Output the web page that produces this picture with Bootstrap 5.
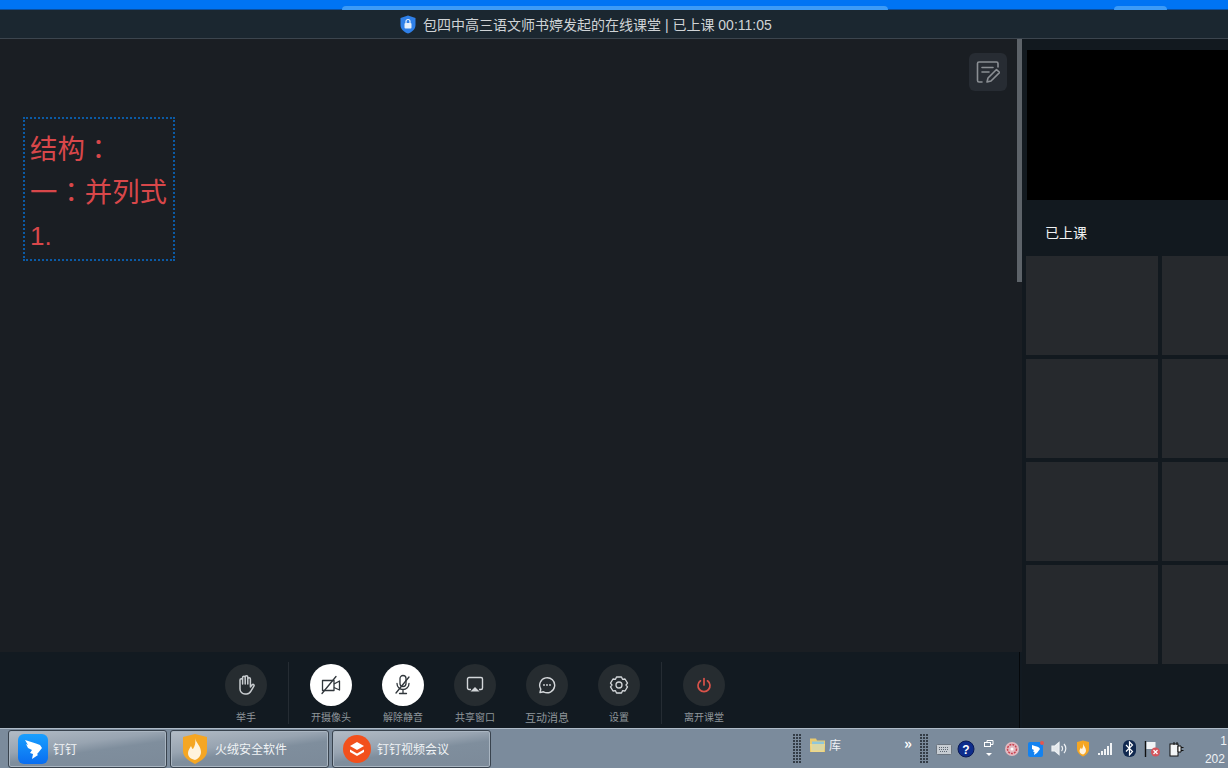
<!DOCTYPE html>
<html lang="zh-CN">
<head>
<meta charset="utf-8">
<title>在线课堂</title>
<link rel="stylesheet" href="https://cdn.jsdelivr.net/npm/bootstrap@5.3.0/dist/css/bootstrap.min.css">
<style>
html,body{height:768px;overflow:hidden;margin:0;background:#1a1e23;font-family:"Liberation Sans","Noto Sans CJK SC",sans-serif}
.shell{width:1228px;height:768px}
.topstrip{height:10px;background:#0074f4;border-bottom:1px solid #0b4f9f}
.toptab{height:4px;margin-top:6px;background:#3d9bf6;border-radius:4px 4px 0 0}
.tab-a{width:546px;margin-left:342px}
.tab-b{width:53px;margin-left:226px}
.titlebar{height:29px;background:#1b2730;border-bottom:1px solid #3c454e;padding:1px 0 0 399px;color:#cfd3d6;font-size:14px;gap:6px;line-height:1}
.bodyrow{height:689px}
.leftcol{width:1022px;flex:none;background:#121a21}
.midrow{height:613px}
.stage{width:1017px;background:#1a1e23;padding:11px 10px 0 23px}
.notebtn{width:38px;height:38px;background:#272c33;border-radius:6px;margin-top:3px}
.notebox{width:152px;height:144px;margin-top:26px;border:2px dotted #0b5aa5;color:#d8474a;font-size:27.4px;line-height:43px;padding:7px 0 0 5px;white-space:nowrap;font-family:"Noto Sans CJK SC",sans-serif}
.midcolon{font-family:"Noto Sans CJK TC",sans-serif}
.onedigit{font-family:"Liberation Sans",sans-serif;font-size:26px}
.scrolltrack{width:5px;background:#1a1e23}
.scrollthumb{height:243px;background:#5d6369}
.sidepanel{width:206px;flex:none;background:#12191f;padding:11px 0 0 4px;overflow:hidden}
.videobox{width:202px;height:150px;background:#000;margin-left:1px}
.statusline{height:56px;color:#f0f2f3;font-size:14px;padding:9px 0 0 19px;font-family:"Noto Sans CJK SC",sans-serif}
.tilegrid{display:grid;grid-template-columns:132px 132px;grid-auto-rows:99px;gap:4px;width:268px}
.tile{background:#26292d}
.toolbar{height:76px;background:#121a21;padding-left:210px;border-right:1px solid #05080b;margin-right:2px}
.toolitem{width:72px;height:76px;padding-top:12px}
.roundbtn{width:42px;height:42px;border-radius:50%;background:#262c30}
.roundbtn.lit{background:#fff}
.toollabel{font-size:10px;line-height:1;margin-top:6px;color:#8f969b;white-space:nowrap;font-family:"Noto Sans CJK SC",sans-serif}
.toollabel.wide{font-size:11px}
.toolsep{width:1px;height:62px;margin:10px 6px 0;background:#252c33}
.taskbar{height:40px;background:#7b8b9c;border-top:1px solid #aebbc8;padding-left:8px}
.taskbtn{width:159px;height:38px;flex:none;margin-right:3px;border:1px solid #39434e;border-radius:3px;box-shadow:inset 0 0 0 1px #a9b5c1;background:linear-gradient(172deg,#b3bcc6 0%,#98a4b1 38%,#7f8e9d 55%,#7c8a99 100%);color:#f0f3f5;font-size:12px;padding-left:9px;gap:5px;white-space:nowrap;font-family:"Noto Sans CJK SC",sans-serif}
.padicon{margin:0 1px}
.gripper{width:8px;height:30px;flex:none;background-image:radial-gradient(circle at 1px 1px,#343d47 1px,transparent 1.1px);background-size:3px 3px}
.bandleft{margin-left:299px}
.bandfolder{margin:-8px 0 0 8px;gap:3px;color:#eef1f4;font-size:12px;font-family:"Noto Sans CJK SC",sans-serif;width:111px;flex:none;padding-right:8px}
.chev{color:#fff;font-size:15px;font-weight:700;line-height:1;margin-left:auto;margin-top:-5px}
.tray{margin-left:8px;flex:none}
.trayicon{width:23.4px;height:24px;flex:none}
.trayfirst{width:18px;height:24px;flex:none}
.clock{color:#eef1f4;font-size:12px;width:40px;flex:none;line-height:18px;white-space:nowrap;text-align:right;padding:2px 1px 0 0}
.clockyear{text-align:left;padding-left:17px}
</style>
</head>
<body>
<div class="shell d-flex flex-column">
  <div class="topstrip d-flex">
    <div class="toptab tab-a"></div>
    <div class="toptab tab-b"></div>
  </div>
  <div class="titlebar d-flex align-items-center">
    <svg width="18" height="19" viewBox="0 0 18 19"><path d="M9 0.500l7.500 2.500v7c0 4.200-3.500 7-7.500 8.500C5 17 1.500 14.200 1.500 10V3z" fill="#2f80e8"/><rect x="5.500" y="8" width="7" height="5.500" rx="1" fill="#e6f0fb"/><path d="M7 8V6.500a2 2 0 0 1 4 0V8" fill="none" stroke="#e6f0fb" stroke-width="1.200"/></svg>
    <span>包四中高三语文师书婷发起的在线课堂 | 已上课 00:11:05</span>
  </div>
  <div class="bodyrow d-flex">
    <div class="leftcol d-flex flex-column">
      <div class="midrow d-flex">
        <div class="stage">
          <div class="d-flex justify-content-end">
            <div class="notebtn d-flex align-items-center justify-content-center">
              <svg width="24" height="24" viewBox="0 0 24 24" fill="none" stroke="#8b8f94" stroke-width="1.600" stroke-linecap="round" stroke-linejoin="round"><path d="M6 22H3a1.500 1.500 0 0 1-1.500-1.500V3.500A1.500 1.500 0 0 1 3 2h17.500A1.500 1.500 0 0 1 22 3.500V7"/><path d="M6 7.500h11M6 12h7"/><path d="M11 22l1-4 8.500-8.500 3 3L15 21z"/></svg>
            </div>
          </div>
          <div class="notebox">结构<span class="midcolon" lang="zh-TW">：</span><br>一<span class="midcolon" lang="zh-TW">：</span>并列式<br><span class="onedigit">1.</span></div>
        </div>
        <div class="scrolltrack"><div class="scrollthumb"></div></div>
      </div>
      <div class="toolbar d-flex">
        <div class="toolitem d-flex flex-column align-items-center">
          <div class="roundbtn d-flex align-items-center justify-content-center">
            <svg width="20" height="22" viewBox="0 0 20 22" fill="none" stroke="#c9cdd0" stroke-width="1.500" stroke-linecap="round" stroke-linejoin="round"><path d="M4 12V6a1.300 1.300 0 0 1 2.600 0v4V3.500a1.300 1.300 0 0 1 2.600 0V10 3a1.300 1.300 0 0 1 2.600 0v7-5a1.300 1.300 0 0 1 2.600 0v8l1.800-2.200c1-1.100 2.500.2 1.700 1.400l-3 5a5 5 0 0 1-4.300 2.800H9A5 5 0 0 1 4 15z"/></svg>
          </div>
          <div class="toollabel">举手</div>
        </div>
        <div class="toolsep"></div>
        <div class="toolitem d-flex flex-column align-items-center">
          <div class="roundbtn lit d-flex align-items-center justify-content-center">
            <svg width="20" height="20" viewBox="0 0 20 20" fill="none" stroke="#30363b" stroke-width="1.300" stroke-linejoin="round"><path d="M13 5.500H1.500v10H13z"/><path d="M13 9l5.500-3v9L13 12.500"/><path d="M1 18.500L15 1.500" stroke-linecap="round"/></svg>
          </div>
          <div class="toollabel">开摄像头</div>
        </div>
        <div class="toolitem d-flex flex-column align-items-center">
          <div class="roundbtn lit d-flex align-items-center justify-content-center">
            <svg width="20" height="22" viewBox="0 0 20 22" fill="none" stroke="#30363b" stroke-width="1.300" stroke-linecap="round"><rect x="7" y="1.500" width="6" height="11" rx="3"/><path d="M4 9.500a6 6 0 0 0 12 0M10 15.500V19M6.500 19.500h7"/><path d="M3 19L16 3"/></svg>
          </div>
          <div class="toollabel">解除静音</div>
        </div>
        <div class="toolitem d-flex flex-column align-items-center">
          <div class="roundbtn d-flex align-items-center justify-content-center">
            <svg width="18" height="18" viewBox="0 0 18 18" fill="none" stroke="#d4d7da" stroke-width="1.400"><path d="M5 13.500H3a1.500 1.500 0 0 1-1.500-1.500V3A1.500 1.500 0 0 1 3 1.500h12A1.500 1.500 0 0 1 16.500 3v9a1.500 1.500 0 0 1-1.500 1.500h-2"/><path d="M9 11l4.500 4.500h-9z" fill="#d4d7da" stroke="none"/></svg>
          </div>
          <div class="toollabel">共享窗口</div>
        </div>
        <div class="toolitem d-flex flex-column align-items-center">
          <div class="roundbtn d-flex align-items-center justify-content-center">
            <svg width="18" height="18" viewBox="0 0 18 18" fill="none" stroke="#d4d7da" stroke-width="1.400"><path d="M2 16.500l.8-3.300A7.500 7.500 0 1 1 5.500 15.800z" stroke-linejoin="round"/><circle cx="6" cy="9" r=".9" fill="#d4d7da" stroke="none"/><circle cx="9" cy="9" r=".9" fill="#d4d7da" stroke="none"/><circle cx="12" cy="9" r=".9" fill="#d4d7da" stroke="none"/></svg>
          </div>
          <div class="toollabel wide">互动消息</div>
        </div>
        <div class="toolitem d-flex flex-column align-items-center">
          <div class="roundbtn d-flex align-items-center justify-content-center">
            <svg width="20" height="20" viewBox="0 0 20 20" fill="none" stroke="#d4d7da" stroke-width="1.300" stroke-linejoin="round"><path d="M7.500 2h5l1 2.300 2.500-.3 2.500 4.200-1.500 1.800 1.500 1.800-2.500 4.200-2.500-.3-1 2.300h-5l-1-2.300-2.500.3L1.500 11.800 3 10 1.500 8.200 4 4l2.500.3z"/><circle cx="10" cy="10" r="3"/></svg>
          </div>
          <div class="toollabel">设置</div>
        </div>
        <div class="toolsep"></div>
        <div class="toolitem d-flex flex-column align-items-center">
          <div class="roundbtn d-flex align-items-center justify-content-center">
            <svg width="16" height="16" viewBox="0 0 16 16" fill="none" stroke="#d9534a" stroke-width="1.700" stroke-linecap="round"><path d="M8 1.500v6.500"/><path d="M4.500 3.800a6 6 0 1 0 7 0"/></svg>
          </div>
          <div class="toollabel">离开课堂</div>
        </div>
      </div>
    </div>
    <div class="sidepanel">
      <div class="videobox"></div>
      <div class="statusline d-flex align-items-center">已上课</div>
      <div class="tilegrid">
        <div class="tile"></div><div class="tile"></div>
        <div class="tile"></div><div class="tile"></div>
        <div class="tile"></div><div class="tile"></div>
        <div class="tile"></div><div class="tile"></div>
      </div>
    </div>
  </div>
  <div class="taskbar d-flex align-items-center">
    <div class="taskbtn d-flex align-items-center">
      <svg width="30" height="30" viewBox="0 0 30 30"><defs><linearGradient id="dtg" x1="0" y1="0" x2="0" y2="1"><stop offset="0" stop-color="#19a0ff"/><stop offset="1" stop-color="#0a6df0"/></linearGradient></defs><rect width="30" height="30" rx="6" fill="url(#dtg)"/><path d="M7 6c5 2 11 3 15 5l2 3-4 5-1 1 1 1-6 4 1-5-3-1 2-3-4-2-2-4 2 1z" fill="#fff"/></svg>
      <span>钉钉</span>
    </div>
    <div class="taskbtn d-flex align-items-center">
      <svg class="padicon" width="28" height="32" viewBox="0 0 28 32"><path d="M2 4l12-3 12 3v14c0 6-6 10-12 13C8 28 2 24 2 18z" fill="#f5a623"/><path d="M14 5c1 5 6 8 6 14 0 4-3 7-6 8-4-1-7-3-7-7 0-3 2-5 3-7 1 2 1 3 2 3 2-3 3-7 2-11z" fill="#fff3dd"/></svg>
      <span>火绒安全软件</span>
    </div>
    <div class="taskbtn d-flex align-items-center">
      <svg class="padicon" width="28" height="28" viewBox="0 0 28 28"><circle cx="14" cy="14" r="14" fill="#f2501c"/><path d="M14 7l7 4-7 4-7-4z" fill="#fff"/><path d="M7 14.500l7 4 7-4v2.500l-7 4-7-4z" fill="#fff"/></svg>
      <span>钉钉视频会议</span>
    </div>
    <div class="gripper bandleft"></div>
    <div class="bandfolder d-flex align-items-center">
      <svg width="17" height="16" viewBox="0 0 17 16"><path d="M1 1.500h6l1 2h8V15H1z" fill="#e8c96e"/><rect x="3" y="4.500" width="12" height="9" fill="#8fc7da"/><path d="M1 7h15l-1.200 8H2.200z" fill="#f2dc93" opacity=".75"/></svg>
      <span>库</span>
      <span class="chev">»</span>
    </div>
    <div class="gripper"></div>
    <div class="tray d-flex align-items-center">
      <div class="trayfirst d-flex align-items-center justify-content-start">
        <svg width="16" height="12" viewBox="0 0 16 12"><rect x=".5" y="1.500" width="15" height="10" rx="1" fill="#c6ccd2" stroke="#6b7580"/><path d="M3 4.500h10M3 6.500h10M4 8.500h8" stroke="#5e6873" stroke-dasharray="1 1"/></svg>
      </div>
      <div class="trayicon d-flex align-items-center justify-content-center">
        <svg width="18" height="18" viewBox="0 0 18 18"><circle cx="9" cy="9" r="8" fill="#0d2c8c" stroke="#0a1a55"/><text x="9" y="13.500" font-size="12" font-weight="700" fill="#fff" text-anchor="middle" font-family="Liberation Sans">?</text></svg>
      </div>
      <div class="trayicon d-flex align-items-center justify-content-center">
        <svg width="12" height="20" viewBox="0 0 12 20" fill="none" stroke="#fff"><rect x="1.500" y="3.500" width="6" height="4"/><path d="M4 3.500v-2h6v4H7.500"/><path d="M3 14h6l-3 3z" fill="#fff" stroke="none"/></svg>
      </div>
      <div class="trayicon d-flex align-items-center justify-content-center">
        <svg width="16" height="16" viewBox="0 0 16 16"><circle cx="8" cy="8" r="7" fill="#e4b9c0"/><circle cx="8" cy="8" r="4.500" fill="none" stroke="#c9414f" stroke-width="1.500" stroke-dasharray="2 1"/><circle cx="8" cy="8" r="1.500" fill="#fff"/></svg>
      </div>
      <div class="trayicon d-flex align-items-center justify-content-center">
        <svg width="16" height="16" viewBox="0 0 16 16"><rect width="15" height="15" y="1" rx="2" fill="#1482f0"/><path d="M4 4c3 1 5 1.500 7 2.500l1 1.500-3 4-3 2 .5-3-1.500-.5 1-1.500-2-1z" fill="#fff"/><circle cx="14" cy="2" r="2" fill="#e4584f"/></svg>
      </div>
      <div class="trayicon d-flex align-items-center justify-content-center">
        <svg width="17" height="15" viewBox="0 0 17 15" fill="none" stroke="#eef1f4" stroke-width="1.200"><path d="M1 5h3l4-3.500v12L4 10H1z" fill="#e4e8ec"/><path d="M10.500 5a3.500 3.500 0 0 1 0 5M13 3a6.500 6.500 0 0 1 0 9"/></svg>
      </div>
      <div class="trayicon d-flex align-items-center justify-content-center">
        <svg width="14" height="17" viewBox="0 0 14 17"><path d="M1 2l6-1.500L13 2v7c0 3.500-3 6-6 7.500C4 15 1 12.500 1 9z" fill="#f5a623"/><path d="M7 3c.5 3 3 4.500 3 7.500 0 2-1.500 3.500-3 4-2-.5-3.500-1.500-3.500-3.500 0-1.500 1-2.500 1.500-3.500.5 1 .5 1.500 1 1.500 1-1.500 1.500-3.500 1-6z" fill="#fff3dd"/></svg>
      </div>
      <div class="trayicon d-flex align-items-center justify-content-center">
        <svg width="16" height="12" viewBox="0 0 16 12" fill="#f1f3f5"><rect x="0" y="10" width="2" height="2"/><rect x="3" y="8" width="2" height="4"/><rect x="6" y="6" width="2" height="6"/><rect x="9" y="3" width="2" height="9"/><rect x="12" y="0" width="2" height="12"/></svg>
      </div>
      <div class="trayicon d-flex align-items-center justify-content-center">
        <svg width="13" height="17" viewBox="0 0 13 17"><rect width="13" height="17" rx="6" fill="#10284f"/><path d="M3 5l6.500 6.500L6.500 15V2l3 3L3 11.500" fill="none" stroke="#fff" stroke-width="1.200"/></svg>
      </div>
      <div class="trayicon d-flex align-items-center justify-content-center">
        <svg width="17" height="16" viewBox="0 0 17 16"><path d="M1.500 0v16" stroke="#111" stroke-width="1.400"/><path d="M2.500 1h9v7h-9z" fill="#f2f4f6"/><circle cx="11.500" cy="11" r="4.500" fill="#d5555c"/><path d="M9.500 9l4 4m0-4l-4 4" stroke="#fff" stroke-width="1.200"/></svg>
      </div>
      <div class="trayicon d-flex align-items-center justify-content-center">
        <svg width="15" height="16" viewBox="0 0 15 16"><rect x="1" y="3" width="8" height="12" fill="#f3f5f7" stroke="#111"/><path d="M9 5h3v6H9z" fill="#fff" stroke="#111"/><path d="M12 6.500h2.500M12 9.500h2.500M5 1v3M8 1v3" stroke="#111"/></svg>
      </div>
      <div class="clock"><div>1</div><div class="clockyear">202</div></div>
    </div>
  </div>
</div>
</body>
</html>
